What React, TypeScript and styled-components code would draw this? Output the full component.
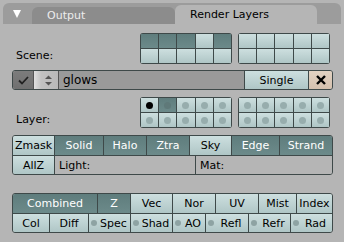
import React from 'react';
import styled, { createGlobalStyle } from 'styled-components';

const Global = createGlobalStyle`
  html, body { margin: 0; padding: 0; background: #b5b5b5; }
  body { font-family: "DejaVu Sans", "Liberation Sans", sans-serif; font-size: 11px; }
`;

const LIGHT = 'linear-gradient(#cddfdf, #afc6c6)';
const DARK = 'linear-gradient(#5f7d7d, #6c8a8a)';
const EDGE = '#3e4949';

const Panel = styled.div`
  width: 344px;
  height: 242px;
  display: flex;
  flex-direction: column;
  background: #b5b5b5;
  overflow: hidden;
`;

const Header = styled.div`
  display: flex;
  align-items: flex-end;
  height: 21px;
  margin: 3px 3px 0 3px;
  padding-left: 10px;
  background: #9c9c9c;
  border-radius: 6px 6px 0 0;
`;

const Triangle = styled.div`
  align-self: flex-start;
  margin-top: 7px;
  width: 0;
  height: 0;
  border-left: 4.5px solid transparent;
  border-right: 4.5px solid transparent;
  border-top: 8px solid #ffffff;
  margin-right: 11px;
`;

const Tab = styled.div<{ $active?: boolean; $w: number }>`
  box-sizing: border-box;
  width: ${p => p.$w}px;
  height: ${p => (p.$active ? 19 : 17)}px;
  padding: ${p => (p.$active ? 3 : 2)}px 0 0 15px;
  border-radius: 6px 6px 0 0;
  background: ${p => (p.$active ? '#b5b5b5' : '#8c8c8c')};
  color: ${p => (p.$active ? '#000' : '#ececec')};
  font-size: 11px;
  line-height: 14px;
`;

const Body = styled.div`
  display: flex;
  flex-direction: column;
  padding: 0 11px 0 12px;
`;

const GridRow = styled.div<{ $top: number }>`
  display: flex;
  align-items: flex-end;
  margin-top: ${p => p.$top}px;
`;

const Label = styled.div`
  box-sizing: border-box;
  width: 128px;
  padding: 0 0 2px 4px;
  font-size: 11px;
  line-height: 13px;
  color: #000;
`;

const GridPair = styled.div`
  display: flex;
  gap: 6px;
`;

const Grid = styled.div`
  box-sizing: border-box;
  width: 92px;
  height: 31px;
  padding: 1px;
  display: grid;
  grid-template-columns: repeat(5, 1fr);
  grid-template-rows: repeat(2, 1fr);
  gap: 1px;
  background: ${EDGE};
  border-radius: 3px;
  overflow: hidden;
`;

const Cell = styled.div<{ $on?: boolean }>`
  display: flex;
  align-items: center;
  justify-content: center;
  background: ${p => (p.$on ? DARK : LIGHT)};
`;

const LayerDot = styled.span<{ $kind: 'off' | 'set' | 'dim' }>`
  width: 7px;
  height: 7px;
  border-radius: 50%;
  background: ${p => (p.$kind === 'set' ? '#000' : p.$kind === 'dim' ? '#5f7979' : '#97adad')};
`;

const LayerRow = styled.div`
  display: flex;
  height: 20px;
  margin-top: 6px;
  box-sizing: border-box;
  border: 1px solid ${EDGE};
  border-radius: 3px;
  overflow: hidden;
`;

const CheckBtn = styled.div`
  flex: 0 0 20px;
  display: flex;
  align-items: center;
  justify-content: center;
  background: linear-gradient(#7c7c7c, #707070);
  border-right: 1px solid #555;
`;

const ArrowBtn = styled.div`
  box-sizing: border-box;
  flex: 0 0 25px;
  display: flex;
  align-items: center;
  justify-content: flex-end;
  padding-right: 6px;
  background: linear-gradient(90deg, #e0e0e0, #c2c2c2 30%, #b9b9b9);
  border-right: 1px solid #555;
`;

const NameField = styled.div`
  flex: 1 1 0;
  min-width: 0;
  display: flex;
  align-items: center;
  padding-left: 4px;
  background: #9a9a9a;
  color: #000;
  font-size: 12px;
`;

const SingleBtn = styled.div`
  box-sizing: border-box;
  flex: 0 0 64px;
  display: flex;
  align-items: center;
  justify-content: center;
  border-left: 1px solid ${EDGE};
  background: ${LIGHT};
  color: #000;
`;

const XBtn = styled.div`
  box-sizing: border-box;
  flex: 0 0 24px;
  display: flex;
  align-items: center;
  justify-content: center;
  border-left: 1px solid ${EDGE};
  background: linear-gradient(#e2d2c2, #d4c0ae);
`;

const Group = styled.div<{ $top: number }>`
  display: flex;
  flex-direction: column;
  margin-top: ${p => p.$top}px;
  border: 1px solid ${EDGE};
  border-radius: 3px;
  overflow: hidden;
`;

const Row = styled.div`
  display: flex;
  height: 19px;
  box-sizing: border-box;
  & + & { border-top: 1px solid ${EDGE}; }
`;

const Btn = styled.div<{ $w: number; $on?: boolean; $field?: boolean; $last?: boolean }>`
  box-sizing: border-box;
  flex: ${p => (p.$last ? '1 1 auto' : `0 0 ${p.$w}px`)};
  display: flex;
  align-items: center;
  justify-content: ${p => (p.$field ? 'flex-start' : 'center')};
  padding-left: ${p => (p.$field ? 4 : 0)}px;
  background: ${p => (p.$field ? '#b5b5b5' : p.$on ? DARK : LIGHT)};
  color: ${p => (p.$on ? '#fff' : '#000')};
  font-size: 11px;
  white-space: nowrap;
  &:not(:first-child) { border-left: 1px solid ${EDGE}; }
`;

const ToggleDot = styled.span`
  flex: 0 0 6px;
  height: 6px;
  margin-left: 2px;
  border-radius: 50%;
  background: #8ea3a3;
`;

const BtnText = styled.span`
  flex: 1 1 auto;
  text-align: center;
`;

type B = { t: string; w: number; on?: boolean; dot?: boolean; field?: boolean };

const ButtonRow = ({ items }: { items: B[] }) => (
  <Row>
    {items.map((b, i) => (
      <Btn key={b.t} $w={i === 0 ? b.w - 1 : b.w} $on={b.on} $field={b.field} $last={i === items.length - 1}>
        {b.dot ? (
          <>
            <ToggleDot />
            <BtnText>{b.t}</BtnText>
          </>
        ) : (
          b.t
        )}
      </Btn>
    ))}
  </Row>
);

const sceneA = [true, true, true, false, true, false, false, false, false, false];
const none = Array(10).fill(false);

export default function App() {
  return (
    <>
      <Global />
      <Panel>
        <Header>
          <Triangle />
          <Tab $w={143}>Output</Tab>
          <Tab $w={142} $active>Render Layers</Tab>
        </Header>
        <Body>
          <GridRow $top={9}>
            <Label>Scene:</Label>
            <GridPair>
              <Grid>{sceneA.map((on, i) => <Cell key={i} $on={on} />)}</Grid>
              <Grid>{none.map((on, i) => <Cell key={i} $on={on} />)}</Grid>
            </GridPair>
          </GridRow>

          <LayerRow>
            <CheckBtn>
              <svg width="11" height="9" viewBox="0 0 11 9">
                <polyline points="1,4.5 4,7.5 10,1" fill="none" stroke="#222" strokeWidth="1.8" />
              </svg>
            </CheckBtn>
            <ArrowBtn>
              <svg width="7" height="11" viewBox="0 0 7 11">
                <polygon points="0,4 7,4 3.5,0.5" fill="#555" />
                <polygon points="0,7 7,7 3.5,10.5" fill="#555" />
              </svg>
            </ArrowBtn>
            <NameField>glows</NameField>
            <SingleBtn>Single</SingleBtn>
            <XBtn>
              <svg width="10" height="10" viewBox="0 0 10 10">
                <path d="M1 1 L9 9 M9 1 L1 9" stroke="#000" strokeWidth="2.4" />
              </svg>
            </XBtn>
          </LayerRow>

          <GridRow $top={7}>
            <Label>Layer:</Label>
            <GridPair>
              <Grid>
                {none.map((_, i) => (
                  <Cell key={i} $on={i === 1}>
                    <LayerDot $kind={i === 0 ? 'set' : i === 1 ? 'dim' : 'off'} />
                  </Cell>
                ))}
              </Grid>
              <Grid>
                {none.map((_, i) => (
                  <Cell key={i}>
                    <LayerDot $kind="off" />
                  </Cell>
                ))}
              </Grid>
            </GridPair>
          </GridRow>

          <Group $top={7}>
            <ButtonRow
              items={[
                { t: 'Zmask', w: 42 },
                { t: 'Solid', w: 49, on: true },
                { t: 'Halo', w: 43, on: true },
                { t: 'Ztra', w: 43, on: true },
                { t: 'Sky', w: 42 },
                { t: 'Edge', w: 48, on: true },
                { t: 'Strand', w: 54, on: true },
              ]}
            />
            <ButtonRow
              items={[
                { t: 'AllZ', w: 42 },
                { t: 'Light:', w: 141, field: true },
                { t: 'Mat:', w: 138, field: true },
              ]}
            />
          </Group>

          <Group $top={18}>
            <ButtonRow
              items={[
                { t: 'Combined', w: 85, on: true },
                { t: 'Z', w: 33, on: true },
                { t: 'Vec', w: 42 },
                { t: 'Nor', w: 43 },
                { t: 'UV', w: 43 },
                { t: 'Mist', w: 38 },
                { t: 'Index', w: 37 },
              ]}
            />
            <ButtonRow
              items={[
                { t: 'Col', w: 37 },
                { t: 'Diff', w: 39 },
                { t: 'Spec', w: 42, dot: true },
                { t: 'Shad', w: 42, dot: true },
                { t: 'AO', w: 33, dot: true },
                { t: 'Refl', w: 43, dot: true },
                { t: 'Refr', w: 42, dot: true },
                { t: 'Rad', w: 43, dot: true },
              ]}
            />
          </Group>
        </Body>
      </Panel>
    </>
  );
}
